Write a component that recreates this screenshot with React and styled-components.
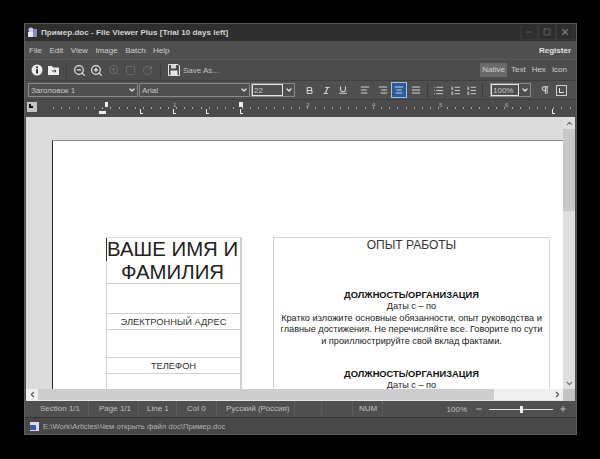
import React from "react";
import styled, { createGlobalStyle } from "styled-components";
import {
  ZoomOut, ZoomIn, RotateCw, ChevronDown, ChevronUp, ChevronLeft, ChevronRight,
  Bold, Italic, Underline, AlignLeft, AlignRight, AlignCenter, AlignJustify, List, ListOrdered, Pilcrow,
  Minus, Plus, X, Square,
} from "lucide-react";

const Global = createGlobalStyle`
  html, body { margin: 0; padding: 0; background: #000; }
  body { width: 600px; height: 459px; overflow: hidden; font-family: "Liberation Sans", Arial, sans-serif; }
`;

const Screen = styled.div`
  width: 600px;
  height: 459px;
  padding: 23px 24px 24px;
  box-sizing: border-box;
  background: #000;
`;
const Win = styled.div`
  width: 553px;
  height: 412px;
  box-sizing: border-box;
  background: #4f4f4f;
  border: 1px solid #5e5e5e;
  border-top-color: #555;
  display: flex;
  flex-direction: column;
  color: #d8d8d8;
  font-size: 8px;
`;
const TitleBar = styled.div`
  height: 17px;
  flex: none;
  background: #2e2e2e;
  display: flex;
  align-items: center;
  padding-left: 2px;
  color: #d4d4d4;
  font-size: 8.1px;
  font-weight: bold;
`;
const AppIcon = styled.svg`
  width: 11px;
  height: 11px;
  margin-right: 3px;
  flex: none;
`;
const TitleText = styled.span`
  flex: 1;
`;
const WinBtn = styled.div`
  width: 18px;
  height: 15px;
  margin-right: ${(p) => p.$mr || 0}px;
  display: flex;
  align-items: center;
  justify-content: center;
  color: #7c7c7c;
  border: 1px solid #383838;
  border-top: none;
  box-sizing: border-box;
`;
const MenuBar = styled.div`
  height: 18px;
  flex: none;
  background: #505050;
  display: flex;
  align-items: center;
  padding: 0 5px 0 4px;
  gap: 7.5px;
  font-size: 8px;
  color: #cfcfcf;
`;
const Register = styled.span`
  margin-left: auto;
  font-weight: bold;
  color: #e2e2e2;
`;
const ToolBar = styled.div`
  height: 20px;
  flex: none;
  background: #4c4c4c;
  border-top: 1px solid #5a5a5a;
  display: flex;
  align-items: center;
  padding: 0 7px 0 5px;
  gap: 4px;
`;
const TBtn = styled.div`
  width: 13px;
  height: 13px;
  flex: none;
  display: flex;
  align-items: center;
  justify-content: center;
  color: ${(p) => (p.$off ? "#6e6e6e" : "#e4e4e4")};
`;
const Sep = styled.div`
  width: 1px;
  height: 15px;
  background: #3c3c3c;
  margin: 0 ${(p) => p.$mr ?? p.$m ?? 3}px 0 ${(p) => p.$m ?? 3}px;
  flex: none;
`;
const SaveAs = styled.span`
  color: #c2c2c2;
  font-size: 8px;
  margin-left: -1px;
`;
const ViewTabs = styled.div`
  margin-left: auto;
  display: flex;
  align-items: center;
  gap: 2px;
`;
const ViewTab = styled.span`
  padding: 2px 2px 3px;
  font-size: 8px;
  color: #cfcfcf;
  background: ${(p) => (p.$on ? "#6a6a6a" : "transparent")};
`;
const FormatBar = styled.div`
  height: 18px;
  flex: none;
  background: #4f4f4f;
  border-top: 1px solid #3f3f3f;
  display: flex;
  align-items: center;
  padding: 0 6px 0 3px;
`;
const Combo = styled.div`
  width: ${(p) => p.$w}px;
  height: 14px;
  flex: none;
  margin-right: 1px;
  box-sizing: border-box;
  border: 1px solid #8a8a8a;
  display: flex;
  align-items: center;
  justify-content: space-between;
  padding-left: 2px;
  font-size: 8px;
  color: #c8c8c8;
`;
const ComboInput = styled.div`
  flex: 1;
  height: 12px;
  line-height: 11px;
  box-sizing: border-box;
  border: 1px solid #e6e6e6;
  margin-left: -2px;
  padding-left: 1px;
`;
const ComboArrow = styled.span`
  width: 11px;
  flex: none;
  display: flex;
  justify-content: center;
  color: #e6e6e6;
`;
const FmtBtn = styled.div`
  width: 16px;
  height: 16px;
  flex: none;
  margin-left: ${(p) => p.$ml || 0}px;
  box-sizing: border-box;
  display: flex;
  align-items: center;
  justify-content: center;
  color: #d4d4d4;
  background: ${(p) => (p.$on ? "#2c5d9b" : "transparent")};
  border: ${(p) => (p.$on ? "1px solid #9ec3ea" : "none")};
`;
const BoxIcon = styled.div`
  width: 11px;
  height: 11px;
  box-sizing: border-box;
  border: 1px solid #cfcfcf;
  position: relative;
  &::after {
    content: "";
    position: absolute;
    left: 2px;
    top: 2px;
    width: 4px;
    height: 4px;
    border-left: 1px solid #e6e6e6;
    border-bottom: 1px solid #e6e6e6;
  }
`;
const Ruler = styled.div`
  height: 18px;
  flex: none;
  position: relative;
  background: #4b4b4b;
  border-top: 1px solid #3f3f3f;
  box-sizing: border-box;
  overflow: hidden;
`;
const RulerCorner = styled.div`
  position: absolute;
  left: 2px;
  top: 2px;
  width: 10px;
  height: 10px;
  background: #c4c4c4;
  &::after {
    content: "";
    position: absolute;
    left: 2px;
    top: 2px;
    width: 4px;
    height: 4px;
    border-left: 2px solid #111;
    border-bottom: 2px solid #111;
    box-sizing: border-box;
  }
`;
const RulerDots = styled.div`
  position: absolute;
  left: 28px;
  right: 3px;
  top: 7px;
  height: 2px;
  background: repeating-linear-gradient(90deg, #a8a8a8 0 1px, transparent 1px 8.2px);
`;
const RulerNum = styled.span`
  position: absolute;
  top: 2px;
  left: ${(p) => p.$x}px;
  font-size: 6px;
  color: #b4b4b4;
`;
const Tab = styled.div`
  position: absolute;
  left: ${(p) => p.$x}px;
  top: 9px;
  width: 3px;
  height: 5px;
  border-left: 1px solid #eee;
  border-bottom: 1px solid #eee;
  box-sizing: border-box;
`;
const Indent = styled.div`
  position: absolute;
  left: ${(p) => p.$x}px;
  top: ${(p) => p.$y}px;
  width: ${(p) => p.$w || 5}px;
  height: ${(p) => p.$h || 5}px;
  background: #eee;
`;
const Middle = styled.div`
  flex: 1;
  min-height: 0;
  display: grid;
  grid-template-columns: minmax(0, 1fr) 12px;
  grid-template-rows: minmax(0, 1fr) 12px;
  margin: 0 1px;
`;
const DocArea = styled.div`
  background: #dcdcdc;
  overflow: hidden;
  padding: 23px 0 0 26px;
  min-height: 0;
`;
const Page = styled.div`
  background: #fff;
  height: 300px;
  padding-top: 96px;
  padding-left: 53px;
  box-sizing: border-box;
  border-left: 1px solid #2a2a2a;
  border-top: 1px solid #888;
  display: flex;
  align-items: flex-start;
  color: #1c1c1c;
  text-align: center;
`;
const Sidebar = styled.div`
  width: 136px;
  flex: none;
  position: relative;
  border-top: 1px solid #dadada;
  border-left: 1px solid #d0d0d0;
  border-right: 2px solid #cfcfcf;
  box-sizing: border-box;
`;
const Cursor = styled.div`
  position: absolute;
  left: -1px;
  top: 0;
  width: 1px;
  height: 23px;
  background: #333;
`;
const NameCell = styled.div`
  height: 46px;
  padding-right: 2px;
  font-size: 20.4px;
  line-height: 23px;
  color: #222;
  white-space: nowrap;
  box-sizing: border-box;
  border-bottom: 1px solid #d0d0d0;
`;
const LabelCell = styled.div`
  height: ${(p) => p.$h}px;
  line-height: ${(p) => p.$h}px;
  font-size: 9.3px;
  color: #333;
  border-top: 1px solid #d0d0d0;
  border-bottom: 1px solid #d0d0d0;
  box-sizing: border-box;
`;
const Blank = styled.div`
  height: ${(p) => p.$h}px;
`;
const Main = styled.div`
  width: 277px;
  height: 200px;
  flex: none;
  margin-left: 31px;
  border: 1px solid #d0d0d0;
  border-right-color: #d8d8d8;
  border-bottom: none;
  box-sizing: border-box;
  padding: 0 5px;
`;
const Heading = styled.div`
  font-size: 12px;
  line-height: 14px;
  color: #333;
  margin-bottom: 37px;
`;
const JobTitle = styled.div`
  font-size: 9.3px;
  font-weight: bold;
  line-height: 12px;
  color: #111;
`;
const Para = styled.div`
  font-size: 9.2px;
  line-height: 11.7px;
  color: #222;
  margin-bottom: ${(p) => p.$mb || 0}px;
`;
const VScroll = styled.div`
  background: #dfdfdf;
  display: flex;
  flex-direction: column;
  justify-content: space-between;
  align-items: center;
  min-height: 0;
  color: #6a6a6a;
  position: relative;
`;
const VThumb = styled.div`
  position: absolute;
  top: 12px;
  left: 0;
  right: 0;
  height: 82px;
  background: #c8c8c8;
`;
const HScroll = styled.div`
  background: #cdcdcd;
  border-bottom: 1px solid #e8e8e8;
  display: flex;
  align-items: center;
  color: #555;
`;
const HRest = styled.div`
  margin-left: auto;
  width: 69px;
  height: 100%;
  background: #f0f0f0;
  display: flex;
  align-items: center;
  justify-content: flex-end;
`;
const ArrowBox = styled.div`
  width: 12px;
  height: 12px;
  flex: none;
  display: flex;
  align-items: center;
  justify-content: center;
  background: ${(p) => p.$bg || "transparent"};
  position: relative;
`;
const Corner = styled.div`
  background: #c4c4c4;
`;
const StatusBar = styled.div`
  height: 16px;
  flex: none;
  background: #4f4f4f;
  border-bottom: 1px solid #333;
  display: flex;
  align-items: center;
  font-size: 8px;
  color: #c0c0c0;
  padding-right: 9px;
`;
const StatusCell = styled.div`
  width: ${(p) => p.$w}px;
  flex: none;
  height: 100%;
  line-height: 15px;
  padding-left: ${(p) => p.$pl}px;
  box-sizing: border-box;
  border-right: 1px solid #5c5c5c;
  white-space: nowrap;
`;
const ZoomLabel = styled.span`
  margin-left: auto;
  margin-right: 8px;
`;
const Slider = styled.div`
  width: 64px;
  height: 1px;
  background: #e0e0e0;
  margin: 0 6px;
  position: relative;
`;
const SliderKnob = styled.div`
  position: absolute;
  left: 31px;
  top: -3px;
  width: 3px;
  height: 7px;
  background: #eee;
`;
const PathBar = styled.div`
  height: 16px;
  flex: none;
  background: #474747;
  display: flex;
  align-items: center;
  padding-left: 4px;
  gap: 3px;
  font-size: 7.7px;
  color: #b4b4b4;
`;
const DocIcon = styled.svg`
  width: 11px;
  height: 11px;
  flex: none;
`;

const I = ({ icon: Icon, size = 11, sw = 2 }) => <Icon size={size} strokeWidth={sw} />;

export default function App() {
  return (
    <Screen>
      <Global />
      <Win>
        <TitleBar>
          <AppIcon viewBox="0 0 11 11">
            <circle cx="4" cy="3" r="2.5" fill="#c9c9ef" />
            <rect x="1" y="5" width="7" height="5" fill="#e6e6f4" />
            <rect x="6" y="2" width="4" height="8" fill="#8a8ab8" />
          </AppIcon>
          <TitleText>Пример.doc - File Viewer Plus [Trial 10 days left]</TitleText>
          <WinBtn><I icon={Minus} size={8} /></WinBtn>
          <WinBtn><I icon={Square} size={8} /></WinBtn>
          <WinBtn $mr={2}><I icon={X} size={10} sw={3} /></WinBtn>
        </TitleBar>
        <MenuBar>
          <span>File</span><span>Edit</span><span>View</span><span>Image</span><span>Batch</span><span>Help</span>
          <Register>Register</Register>
        </MenuBar>
        <ToolBar>
          <TBtn>
            <svg width="12" height="12" viewBox="0 0 12 12">
              <circle cx="6" cy="6" r="5.5" fill="#eee" />
              <rect x="5" y="5" width="2" height="4.5" fill="#3a3a3a" />
              <rect x="5" y="2.4" width="2" height="1.8" fill="#3a3a3a" />
            </svg>
          </TBtn>
          <TBtn>
            <svg width="13" height="12" viewBox="0 0 13 12">
              <path d="M1 2h4l1 1.5h6V11H1z" fill="#eee" />
              <path d="M5 7h4M7.5 5.5L9 7 7.5 8.5" stroke="#444" fill="none" />
            </svg>
          </TBtn>
          <Sep $m={2} />
          <TBtn><I icon={ZoomOut} size={13} sw={2.2} /></TBtn>
          <TBtn><I icon={ZoomIn} size={13} sw={2.2} /></TBtn>
          <TBtn $off><I icon={ZoomIn} size={12} /></TBtn>
          <TBtn $off><I icon={Square} size={11} /></TBtn>
          <TBtn $off><I icon={RotateCw} size={11} /></TBtn>
          <Sep $m={2} />
          <TBtn>
            <svg width="12" height="12" viewBox="0 0 12 12">
              <path d="M.5.5h9.5l1.5 1.5v9.5H.5z" fill="#4c4c4c" stroke="#e6e6e6" />
              <rect x="3" y="1" width="5" height="3.5" fill="#d8d8d8" />
              <rect x="2.5" y="6.5" width="7" height="4.5" fill="#e6e6e6" />
            </svg>
          </TBtn>
          <SaveAs>Save As...</SaveAs>
          <ViewTabs>
            <ViewTab $on>Native</ViewTab>
            <ViewTab>Text</ViewTab>
            <ViewTab>Hex</ViewTab>
            <ViewTab>Icon</ViewTab>
          </ViewTabs>
        </ToolBar>
        <FormatBar>
          <Combo $w={110}>Заголовок 1<ComboArrow><I icon={ChevronDown} size={8} sw={4} /></ComboArrow></Combo>
          <Combo $w={111}>Arial<ComboArrow><I icon={ChevronDown} size={8} sw={4} /></ComboArrow></Combo>
          <Combo $w={44}><ComboInput>22</ComboInput><ComboArrow><I icon={ChevronDown} size={8} sw={4} /></ComboArrow></Combo>
          <FmtBtn $ml={5}><I icon={Bold} size={9} sw={3} /></FmtBtn>
          <FmtBtn $ml={1}><I icon={Italic} size={9} sw={3} /></FmtBtn>
          <FmtBtn $ml={1}><I icon={Underline} size={10} sw={2.5} /></FmtBtn>
          <FmtBtn $ml={6}><I icon={AlignLeft} size={10} sw={2.5} /></FmtBtn>
          <FmtBtn $ml={2}><I icon={AlignRight} size={10} sw={2.5} /></FmtBtn>
          <FmtBtn $on><I icon={AlignCenter} size={10} sw={2.5} /></FmtBtn>
          <FmtBtn $ml={1}><I icon={AlignJustify} size={10} sw={2.5} /></FmtBtn>
          <Sep $m={3} $mr={2} />
          <FmtBtn><I icon={List} size={11} /></FmtBtn>
          <FmtBtn $ml={1}><I icon={ListOrdered} size={11} /></FmtBtn>
          <FmtBtn><I icon={ListOrdered} size={11} /></FmtBtn>
          <Sep $m={3} $mr={7} />
          <Combo $w={41}><ComboInput>100%</ComboInput><ComboArrow><I icon={ChevronDown} size={8} sw={4} /></ComboArrow></Combo>
          <FmtBtn $ml={5}><I icon={Pilcrow} size={10} sw={2.5} /></FmtBtn>
          <FmtBtn><BoxIcon /></FmtBtn>
        </FormatBar>
        <Ruler>
          <RulerCorner />
          <RulerDots />
          <RulerNum $x={148}>1</RulerNum>
          <RulerNum $x={281}>2</RulerNum>
          <RulerNum $x={347}>4</RulerNum>
          <RulerNum $x={414}>5</RulerNum>
          <RulerNum $x={480}>6</RulerNum>
          <Indent $x={80} $y={2} $w={3} $h={5} />
          <Indent $x={74} $y={11} $w={7} $h={3} />
          <Tab $x={115} />
          <Tab $x={148} />
          <Tab $x={181} />
          <Indent $x={214} $y={2} $w={4} $h={5} />
          <Tab $x={215} />
          <Tab $x={527} />
        </Ruler>
        <Middle>
          <DocArea>
            <Page>
              <Sidebar>
                <Cursor />
                <NameCell>ВАШЕ ИМЯ И<br />ФАМИЛИЯ</NameCell>
                <Blank $h={29} />
                <LabelCell $h={17}>ЭЛЕКТРОННЫЙ АДРЕС</LabelCell>
                <Blank $h={27} />
                <LabelCell $h={17}>ТЕЛЕФОН</LabelCell>
                <Blank $h={40} />
              </Sidebar>
              <Main>
                <Heading>ОПЫТ РАБОТЫ</Heading>
                <JobTitle>ДОЛЖНОСТЬ/ОРГАНИЗАЦИЯ</JobTitle>
                <Para>Даты с – по</Para>
                <Para $mb={20}>
                  Кратко изложите основные обязанности, опыт руководства и главные достижения. Не перечисляйте все. Говорите по сути и проиллюстрируйте свой вклад фактами.
                </Para>
                <JobTitle>ДОЛЖНОСТЬ/ОРГАНИЗАЦИЯ</JobTitle>
                <Para>Даты с – по</Para>
              </Main>
            </Page>
          </DocArea>
          <VScroll>
            <VThumb />
            <ArrowBox $bg="#dfdfdf"><I icon={ChevronUp} size={9} sw={3} /></ArrowBox>
            <ArrowBox $bg="#dfdfdf"><I icon={ChevronDown} size={9} sw={3} /></ArrowBox>
          </VScroll>
          <HScroll>
            <ArrowBox $bg="#f0f0f0"><I icon={ChevronLeft} size={9} sw={3} /></ArrowBox>
            <HRest><ArrowBox><I icon={ChevronRight} size={9} sw={3} /></ArrowBox></HRest>
          </HScroll>
          <Corner />
        </Middle>
        <StatusBar>
          <StatusCell $w={64} $pl={15}>Section 1/1</StatusCell>
          <StatusCell $w={50} $pl={10}>Page 1/1</StatusCell>
          <StatusCell $w={38} $pl={8}>Line 1</StatusCell>
          <StatusCell $w={40} $pl={10}>Col 0</StatusCell>
          <StatusCell $w={78} $pl={9}>Русский (Россия)</StatusCell>
          <StatusCell $w={27} $pl={0} />
          <StatusCell $w={31} $pl={0} />
          <StatusCell $w={30} $pl={6}>NUM</StatusCell>
          <ZoomLabel>100%</ZoomLabel>
          <I icon={Minus} size={8} sw={3} />
          <Slider><SliderKnob /></Slider>
          <I icon={Plus} size={8} sw={3} />
        </StatusBar>
        <PathBar>
          <DocIcon viewBox="0 0 11 11">
            <rect x="1" y="1" width="9" height="9" fill="#d8dcf0" />
            <rect x="1" y="4" width="6" height="5" fill="#3c5aa0" />
          </DocIcon>
          <span>E:\Work\Articles\Чем открыть файл doc\Пример.doc</span>
        </PathBar>
      </Win>
    </Screen>
  );
}
